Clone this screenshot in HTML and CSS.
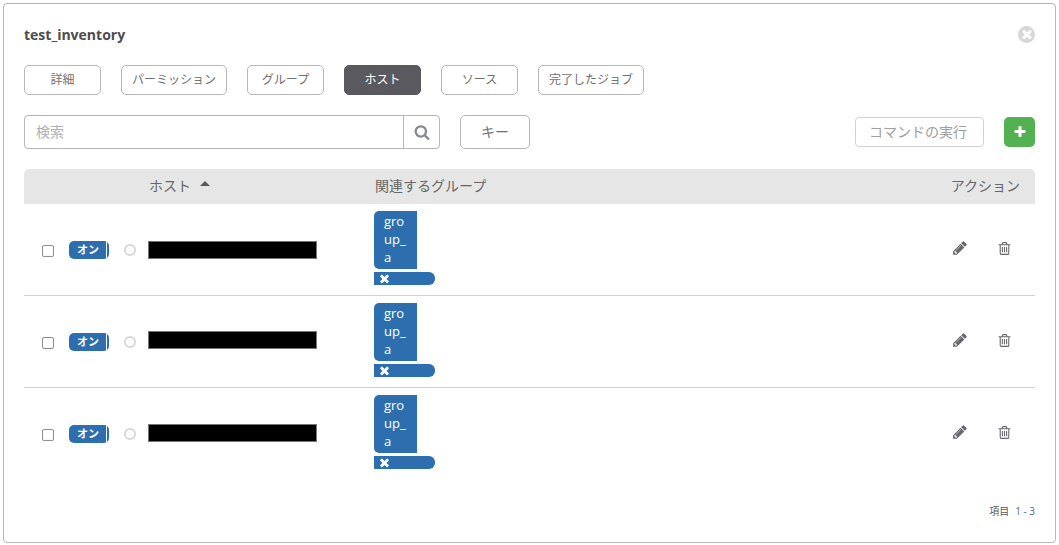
FILE: index.html
```html
<!DOCTYPE html>
<html lang="ja">
<head>
<meta charset="utf-8">
<title>test_inventory</title>
<link rel="stylesheet" href="styles.css">
</head>
<body>
<svg class="defs" width="0" height="0" aria-hidden="true">
  <symbol id="i-pencil" viewBox="0 0 1792 1792"><path d="M491 1536l91-91-235-235-91 91v107h128v128h107zm523-928q0-22-22-22-10 0-17 7l-542 542q-7 7-7 17 0 22 22 22 10 0 17-7l542-542q7-7 7-17zm-54-192l416 416-832 832h-416v-416zm683 96q0 53-37 90l-166 166-416-416 166-165q36-38 90-38 53 0 91 38l235 234q37 39 37 91z"/></symbol>
  <symbol id="i-trash" viewBox="0 0 1792 1792"><path d="M704 736v576q0 14-9 23t-23 9h-64q-14 0-23-9t-9-23v-576q0-14 9-23t23-9h64q14 0 23 9t9 23zm256 0v576q0 14-9 23t-23 9h-64q-14 0-23-9t-9-23v-576q0-14 9-23t23-9h64q14 0 23 9t9 23zm256 0v576q0 14-9 23t-23 9h-64q-14 0-23-9t-9-23v-576q0-14 9-23t23-9h64q14 0 23 9t9 23zm128 724v-948h-896v948q0 22 7 40.5t14.5 27 10.5 8.5h832q3 0 10.5-8.5t14.5-27 7-40.5zm-672-1076h448l-48-117q-7-9-17-11h-317q-10 2-17 11zm928 32v64q0 14-9 23t-23 9h-96v948q0 83-47 143.5t-113 60.5h-832q-66 0-113-58.5t-47-141.5v-952h-96q-14 0-23-9t-9-23v-64q0-14 9-23t23-9h309l70-167q15-37 54-63t79-26h320q40 0 79 26t54 63l70 167h309q14 0 23 9t9 23z"/></symbol>
  <symbol id="i-search" viewBox="0 0 1792 1792"><path d="M1216 832q0-185-131.5-316.5t-316.5-131.5-316.5 131.5-131.5 316.5 131.5 316.5 316.5 131.5 316.5-131.5 131.5-316.5zm512 832q0 52-38 90t-90 38q-54 0-90-38l-343-342q-179 124-399 124-143 0-273.5-55.5t-225-150-150-225-55.5-273.5 55.5-273.5 150-225 225-150 273.5-55.5 273.5 55.5 225 150 150 225 55.5 273.5q0 220-124 399l343 343q37 37 37 90z"/></symbol>
  <symbol id="i-times" viewBox="0 0 1792 1792"><path d="M1490 1322q0 40-28 68l-136 136q-28 28-68 28t-68-28l-294-294-294 294q-28 28-68 28t-68-28l-136-136q-28-28-28-68t28-68l294-294-294-294q-28-28-28-68t28-68l136-136q28-28 68-28t68 28l294 294 294-294q28-28 68-28t68 28l136 136q28 28 28 68t-28 68l-294 294 294 294q28 28 28 68z"/></symbol>
  <symbol id="i-plus" viewBox="0 0 1792 1792"><path d="M1600 736v192q0 40-28 68t-68 28h-416v416q0 40-28 68t-68 28h-192q-40 0-68-28t-28-68v-416h-416q-40 0-68-28t-28-68v-192q0-40 28-68t68-28h416v-416q0-40 28-68t68-28h192q40 0 68 28t28 68v416h416q40 0 68 28t28 68z"/></symbol>
</svg>
<main class="panel">
  <header class="panel-head">
    <h1 class="title">test_inventory</h1>
    <button class="close" type="button" aria-label="閉じる"><svg class="close-x"><use href="#i-times"/></svg></button>
  </header>

  <nav class="tabs">
    <a class="tab">詳細</a>
    <a class="tab tab-wide">パーミッション</a>
    <a class="tab">グループ</a>
    <a class="tab tab-active">ホスト</a>
    <a class="tab">ソース</a>
    <a class="tab tab-wide">完了したジョブ</a>
  </nav>

  <div class="toolbar">
    <div class="search">
      <span class="search-input">検索</span>
      <span class="search-btn"><svg class="search-icon"><use href="#i-search"/></svg></span>
    </div>
    <button class="key" type="button">キー</button>
    <div class="toolbar-right">
      <button class="run" type="button">コマンドの実行</button>
      <button class="add" type="button" aria-label="追加"><svg class="add-icon"><use href="#i-plus"/></svg></button>
    </div>
  </div>

  <div class="table">
    <div class="thead">
      <span class="th-host">ホスト<span class="sort"></span></span>
      <span class="th-group">関連するグループ</span>
      <span class="th-action">アクション</span>
    </div>

    <div class="row">
      <span class="check"></span>
      <span class="toggle"><span class="toggle-label">オン</span></span>
      <span class="status"></span>
      <span class="host"></span>
      <div class="groups">
        <span class="chip">group_a</span>
        <span class="chip-del"><svg class="chip-x"><use href="#i-times"/></svg></span>
      </div>
      <div class="actions">
        <svg class="act-icon"><use href="#i-pencil"/></svg>
        <svg class="act-icon act-trash"><use href="#i-trash"/></svg>
      </div>
    </div>

    <div class="row">
      <span class="check"></span>
      <span class="toggle"><span class="toggle-label">オン</span></span>
      <span class="status"></span>
      <span class="host host-up2"></span>
      <div class="groups">
        <span class="chip">group_a</span>
        <span class="chip-del"><svg class="chip-x"><use href="#i-times"/></svg></span>
      </div>
      <div class="actions">
        <svg class="act-icon"><use href="#i-pencil"/></svg>
        <svg class="act-icon act-trash"><use href="#i-trash"/></svg>
      </div>
    </div>

    <div class="row row-last">
      <span class="check"></span>
      <span class="toggle"><span class="toggle-label">オン</span></span>
      <span class="status"></span>
      <span class="host host-up1"></span>
      <div class="groups">
        <span class="chip">group_a</span>
        <span class="chip-del"><svg class="chip-x"><use href="#i-times"/></svg></span>
      </div>
      <div class="actions">
        <svg class="act-icon"><use href="#i-pencil"/></svg>
        <svg class="act-icon act-trash"><use href="#i-trash"/></svg>
      </div>
    </div>
  </div>

  <footer class="pager"><span class="pager-label">項目</span><span class="pager-range">1 - 3</span></footer>
</main>
</body>
</html>
```

FILE: styles.css
```css
* { box-sizing: border-box; }

html, body { margin: 0; height: 100%; background: #fff; }

body {
  padding: 3px 3px 2px 3px;
  font-family: "Open Sans", "Noto Sans CJK JP", sans-serif;
  color: #707070;
  overflow: hidden;
}

.defs { position: absolute; }

svg { fill: currentColor; display: block; }

button { font-family: inherit; cursor: pointer; }

.panel {
  height: 540px;
  border: 1px solid #b7b7b7;
  border-radius: 4px;
  padding: 20px 20px 0;
  display: flex;
  flex-direction: column;
}

.panel-head {
  display: flex;
  justify-content: space-between;
  align-items: center;
  height: 22px;
}

.title {
  margin: 0;
  font-size: 14px;
  font-weight: 700;
  line-height: 22px;
  color: #4d4d4d;
}

.close {
  width: 17px;
  height: 17px;
  margin-top: -2px;
  padding: 0;
  border: 0;
  border-radius: 50%;
  background: #d7d7d7;
  color: #fff;
  display: flex;
  align-items: center;
  justify-content: center;
}

.close-x { width: 14px; height: 14px; }

.tabs {
  display: flex;
  gap: 20px;
  margin-top: 19px;
}

.tab {
  width: 77px;
  height: 30px;
  padding-bottom: 2px;
  border: 1px solid #b7b7b7;
  border-radius: 5px;
  display: flex;
  align-items: center;
  justify-content: center;
  font-size: 12px;
  color: #707070;
}

.tab-wide { width: 106px; }

.tab-active {
  background: #59595f;
  border-color: #59595f;
  color: #fff;
}

.toolbar {
  display: flex;
  align-items: center;
  margin-top: 20px;
  height: 34px;
}

.search {
  width: 416px;
  height: 34px;
  border: 1px solid #b7b7b7;
  border-radius: 4px;
  display: flex;
}

.search-input {
  flex: 1;
  padding-left: 11px;
  font-size: 14px;
  line-height: 32px;
  color: #b0b0b0;
}

.search-btn {
  width: 36px;
  border-left: 1px solid #b7b7b7;
  display: flex;
  align-items: center;
  justify-content: center;
  color: #848992;
}

.search-icon { width: 16px; height: 16px; }

.key {
  width: 70px;
  height: 34px;
  margin-left: 20px;
  padding: 0 0 2px;
  background: #fff;
  border: 1px solid #b7b7b7;
  border-radius: 5px;
  font-size: 14px;
  color: #707070;
}

.toolbar-right {
  margin-left: auto;
  display: flex;
  gap: 20px;
}

.run {
  width: 129px;
  height: 30px;
  padding: 0 3px 3px 0;
  background: #fff;
  border: 1px solid #d2d2d2;
  border-radius: 4px;
  font-size: 14px;
  color: #a0a0a0;
}

.add {
  width: 31px;
  height: 30px;
  padding: 0;
  background: #54b151;
  border: 0;
  border-radius: 5px;
  color: #fff;
  display: flex;
  align-items: center;
  justify-content: center;
}

.add-icon { width: 14px; height: 14px; }

.table { margin-top: 20px; }

.thead {
  height: 35px;
  padding: 0 15px 3px 125px;
  background: #e6e6e6;
  border-radius: 5px 5px 0 0;
  display: flex;
  align-items: center;
  font-size: 14px;
  color: #666;
}

.th-host {
  width: 226px;
  display: flex;
  align-items: center;
}

.sort {
  width: 0;
  height: 0;
  margin-left: 9px;
  margin-top: -3px;
  border-left: 5px solid transparent;
  border-right: 5px solid transparent;
  border-bottom: 5px solid #59595f;
}

.th-group { flex: 1; }

.th-action { margin-left: -1px; }

.row {
  height: 92px;
  border-bottom: 1px solid #d2d2d2;
  display: flex;
  align-items: center;
  padding-left: 18px;
}

.row-last { border-bottom: 0; }

.check {
  width: 12px;
  height: 12px;
  margin-top: 2px;
  border: 1px solid #8e8e8e;
  border-radius: 2px;
  background: #fff;
}

.toggle {
  width: 40px;
  height: 18px;
  margin-left: 15px;
  background: #2d6fae;
  border-radius: 5px;
  position: relative;
  display: block;
}

.toggle::after {
  content: "";
  position: absolute;
  right: 2px;
  top: 1px;
  bottom: 1px;
  width: 1px;
  background: #fff;
}

.toggle-label {
  display: block;
  padding-left: 8px;
  font-size: 11px;
  font-weight: 700;
  line-height: 17px;
  color: #fff;
}

.status {
  width: 12px;
  height: 12px;
  margin-left: 15px;
  border: 2px solid #d7d7d7;
  border-radius: 50%;
}

.host {
  width: 169px;
  height: 18px;
  margin-left: 12px;
  background: #000;
  border: 1px solid #777;
}

.host-up2 { margin-bottom: 4px; }
.host-up1 { margin-bottom: 2px; }

.groups {
  margin-left: 57px;
  margin-bottom: 4px;
  width: 61px;
  display: flex;
  flex-direction: column;
  align-items: flex-start;
}

.chip {
  width: 43px;
  padding: 1px 10px 3px;
  background: #2d6fae;
  border-radius: 5px 0 0 5px;
  color: #fff;
  font-size: 13px;
  font-weight: 500;
  line-height: 18px;
  word-break: break-all;
}

.chip-del {
  width: 61px;
  height: 13px;
  margin-top: 3px;
  background: #2d6fae;
  border-radius: 0 6px 6px 0;
  color: #fff;
  display: flex;
  align-items: center;
  padding-left: 4px;
}

.chip-x { width: 13px; height: 13px; }

.actions {
  margin-left: auto;
  padding-right: 23px;
  display: flex;
  gap: 29px;
  color: #67676d;
  margin-top: -4px;
}

.act-icon { width: 16px; height: 16px; }
.act-trash { width: 15px; height: 15px; margin-top: 1px; }

.pager {
  margin-top: auto;
  margin-bottom: 25px;
  display: flex;
  justify-content: flex-end;
  gap: 6px;
  font-size: 10px;
  line-height: 12px;
  color: #5a5a5a;
}

.pager-range { color: #4a6a8f; }
```
